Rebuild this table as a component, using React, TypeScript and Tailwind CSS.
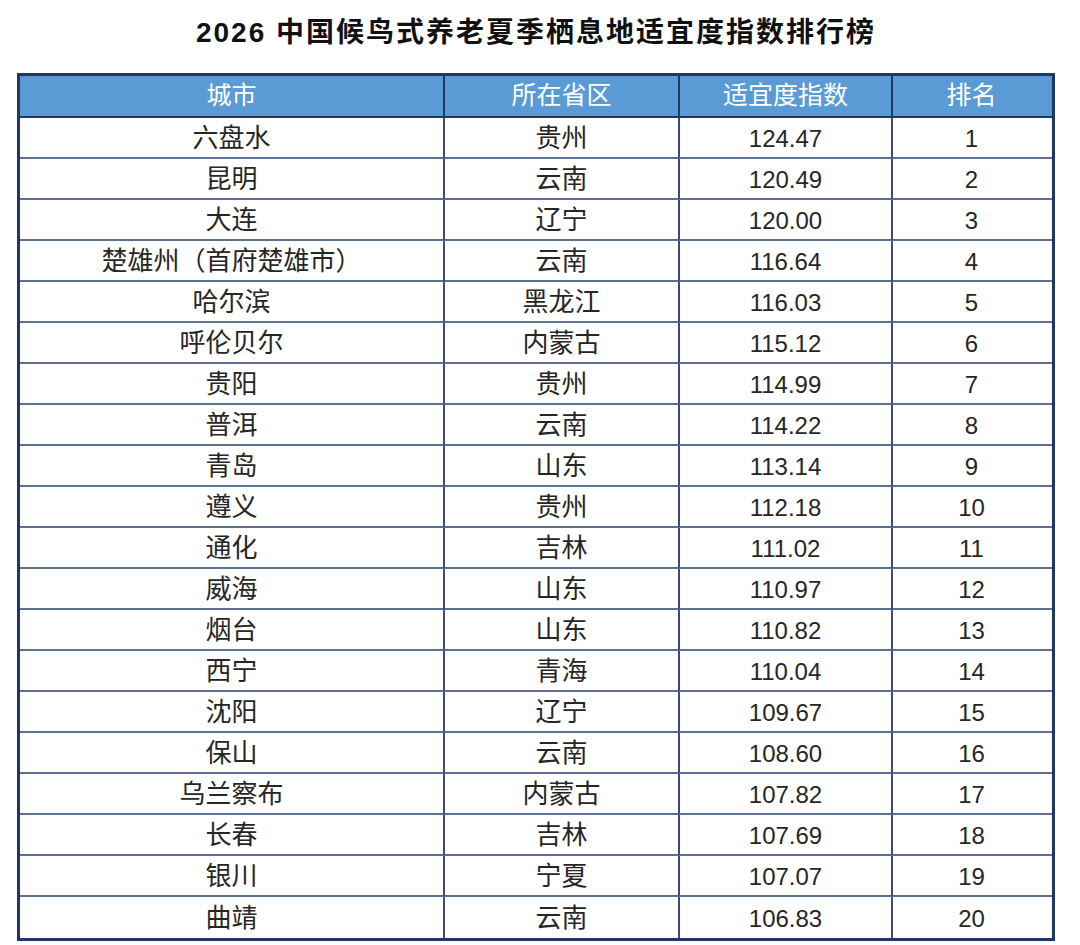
import React from "react";

interface Row {
  city: string;
  province: string;
  score: string;
  rank: number;
}

const rows: Row[] = [
  { city: "六盘水", province: "贵州", score: "124.47", rank: 1 },
  { city: "昆明", province: "云南", score: "120.49", rank: 2 },
  { city: "大连", province: "辽宁", score: "120.00", rank: 3 },
  { city: "楚雄州（首府楚雄市）", province: "云南", score: "116.64", rank: 4 },
  { city: "哈尔滨", province: "黑龙江", score: "116.03", rank: 5 },
  { city: "呼伦贝尔", province: "内蒙古", score: "115.12", rank: 6 },
  { city: "贵阳", province: "贵州", score: "114.99", rank: 7 },
  { city: "普洱", province: "云南", score: "114.22", rank: 8 },
  { city: "青岛", province: "山东", score: "113.14", rank: 9 },
  { city: "遵义", province: "贵州", score: "112.18", rank: 10 },
  { city: "通化", province: "吉林", score: "111.02", rank: 11 },
  { city: "威海", province: "山东", score: "110.97", rank: 12 },
  { city: "烟台", province: "山东", score: "110.82", rank: 13 },
  { city: "西宁", province: "青海", score: "110.04", rank: 14 },
  { city: "沈阳", province: "辽宁", score: "109.67", rank: 15 },
  { city: "保山", province: "云南", score: "108.60", rank: 16 },
  { city: "乌兰察布", province: "内蒙古", score: "107.82", rank: 17 },
  { city: "长春", province: "吉林", score: "107.69", rank: 18 },
  { city: "银川", province: "宁夏", score: "107.07", rank: 19 },
  { city: "曲靖", province: "云南", score: "106.83", rank: 20 },
];

const font = { fontFamily: '"Liberation Sans", "Noto Sans CJK SC", sans-serif' };

const App = () => {
  return (
    <div className="w-[1080px] h-[945px] bg-white" style={font}>
      <div className="h-[73px] flex items-center justify-center pb-[8px] pr-[8px]">
        <h1 className="text-[28px] font-bold text-[#111] tracking-[2px]">
          2026 中国候鸟式养老夏季栖息地适宜度指数排行榜
        </h1>
      </div>

      <div className="ml-[17px] w-[1038px] border-[3px] border-[#1f3864]">
        {/* header */}
        <div className="grid grid-cols-[425px_235px_213px_157px] h-[42px] bg-[#5b9bd5] text-white text-[25px] border-b-2 border-[#1f3864]">
          <div className="flex items-center justify-center border-r-2 border-[#1f3864]">城市</div>
          <div className="flex items-center justify-center border-r-2 border-[#1f3864]">所在省区</div>
          <div className="flex items-center justify-center border-r-2 border-[#1f3864]">适宜度指数</div>
          <div className="flex items-center justify-center">排名</div>
        </div>

        {rows.map((r, i) => (
          <div
            key={r.rank}
            className={
              "grid grid-cols-[425px_235px_213px_157px] h-[41px] text-[#262626] " +
              (i < rows.length - 1 ? "border-b-2 border-[#5f6f92]" : "")
            }
          >
            <div className="flex items-center justify-center border-r-2 border-[#3a4d78] text-[26px] pt-[1px]">{r.city}</div>
            <div className="flex items-center justify-center border-r-2 border-[#3a4d78] text-[26px] pt-[1px]">{r.province}</div>
            <div className="flex items-center justify-center border-r-2 border-[#3a4d78] text-[24px] pt-[2px]">{r.score}</div>
            <div className="flex items-center justify-center text-[24px] pt-[2px]">{r.rank}</div>
          </div>
        ))}
      </div>
    </div>
  );
};

export default App;
